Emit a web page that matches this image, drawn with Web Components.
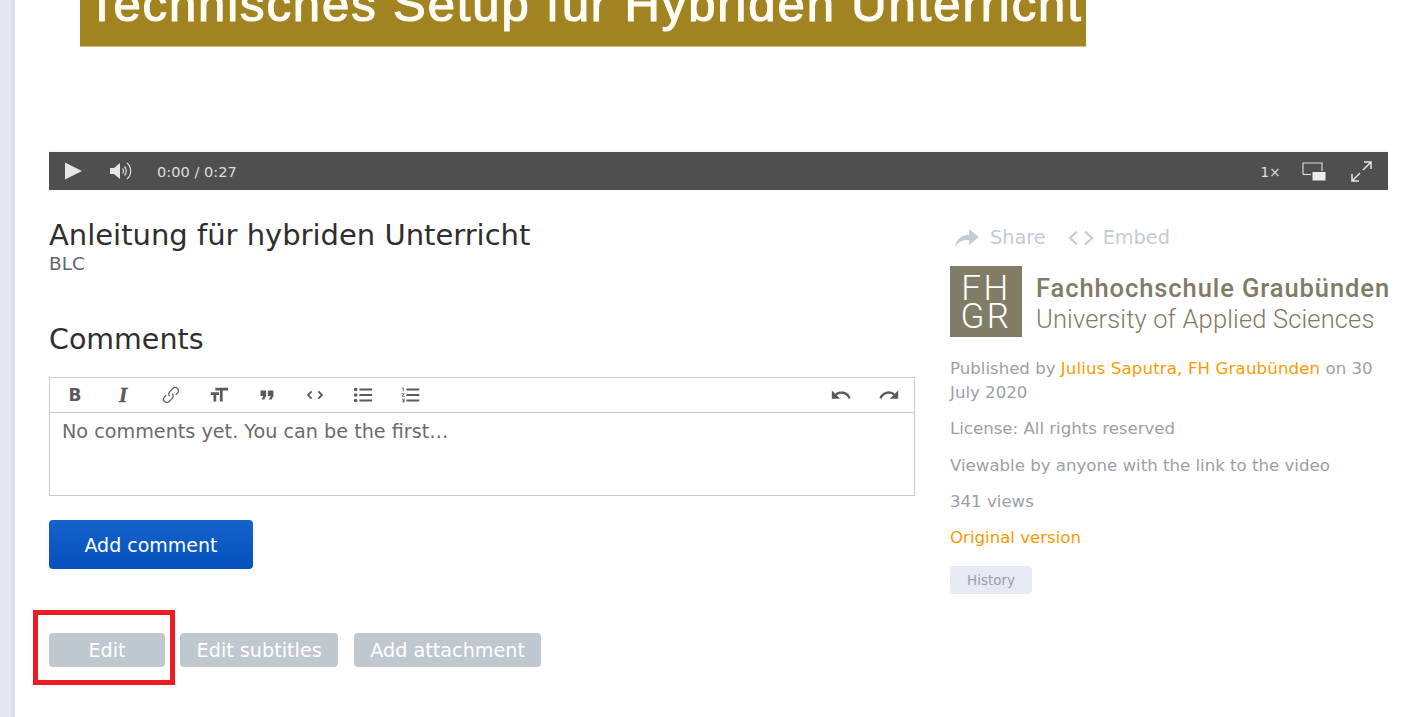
<!DOCTYPE html>
<html lang="en"><head><meta charset="utf-8"><title>Anleitung</title>
<style>
html,body{margin:0;padding:0;background:#fff;overflow:hidden}
body{font-family:"DejaVu Sans",Verdana,sans-serif;width:1414px;height:717px}
</style></head><body>
<app-shell>
  <video-player slot="video"></video-player>
  <div slot="main" style="display:contents">
    <video-title>Anleitung für hybriden Unterricht<span slot="sub">BLC</span></video-title>
    <comment-box></comment-box>
    <action-bar></action-bar>
  </div>
  <video-info slot="side"></video-info>
</app-shell>
<script>
function def(name, html){
  customElements.define(name, class extends HTMLElement{
    constructor(){super();this.attachShadow({mode:'open'}).innerHTML=html;}
  });
}
def('app-shell',`<style>
:host{display:flex;width:1414px;height:717px;position:relative;overflow:hidden;background:#fff}
.strip{width:15px;flex:none;background:linear-gradient(90deg,#e4e8f1 0,#e4e8f1 11px,#d5dae6 14px,#eceef4 15px);}
.page{flex:1;padding:0 26px 0 34px;display:flex;flex-direction:column;min-width:0}
.row{display:flex;gap:35px;margin-top:0}
.l{width:866px;flex:none}
.r{flex:1;min-width:0}
</style><div class="strip"></div><div class="page"><slot name="video"></slot><div class="row"><div class="l"><slot name="main"></slot></div><div class="r"><slot name="side"></slot></div></div></div>`);
def('video-player',`<style>
:host{display:flex;flex-direction:column;height:190px;width:1339px;font-family:"DejaVu Sans",sans-serif}
.pic{height:150px;background:#fff;padding-left:31px}
.banner{width:1006px;height:47px;background:#a28322;overflow:hidden;display:flex;align-items:flex-start;box-sizing:border-box;border-bottom:1px solid #d3c07f;padding-left:7px}
.banner span{font:400 49px/50px "Liberation Sans",sans-serif;color:#fffdf5;-webkit-text-stroke:1.200px #fffdf5;white-space:nowrap;letter-spacing:1.900px;margin-top:-21px;filter:blur(.5px)}
.sep{height:2px;background:#f6f6f6}
.bar{height:38px;background:#4f4f4f;display:flex;align-items:center;color:#dedede;font-size:14.6px;position:relative}
.bar svg{display:block;flex:none}
.t{margin-left:23px;margin-top:1px}
.sp{flex:1}
</style><div class="pic"><div class="banner"><span>Technisches Setup für Hybriden Unterricht</span></div></div><div class="sep"></div>
<div class="bar">
<svg style="margin-left:16px" width="17" height="18" viewBox="0 0 17 18"><path d="M0 0.5L17 9L0 17.5z" fill="#e6e6e6"/></svg>
<svg style="margin-left:28px" width="24" height="22" viewBox="0 0 24 22" fill="none"><path d="M0 8h4l6-5v16l-6-5H0z" fill="#e6e6e6"/><path d="M12.5 8.500a3.500 3.500 0 0 1 0 5M14.500 6.500a6.500 6.500 0 0 1 0 9M17 3a10.500 10.500 0 0 1 0 16" stroke="#e6e6e6" stroke-width="1.1"/></svg>
<span class="t">0:00 / 0:27</span><span class="sp"></span>
<span style="font-size:13.5px;letter-spacing:.3px;margin-right:21px;margin-top:2px">1×</span>
<svg style="margin-right:25px" width="24" height="19" viewBox="0 0 24 19" fill="none"><path d="M1 12.500V1h19v8" stroke="#e0e0e0" stroke-width="1.1"/><path d="M1 12.500h8" stroke="#e0e0e0" stroke-width="1.1"/><rect x="10.500" y="10" width="13" height="8.500" fill="#ececec"/></svg>
<svg style="margin-right:16px" width="21" height="21" viewBox="0 0 21 21" fill="none" stroke="#e6e6e6" stroke-width="1.5"><path d="M13 1h7v7M20 1l-8 8M1 13v7h7M1 20l8-8"/></svg>
</div>`);
def('video-title',`<style>
:host{display:block;padding-top:27px;color:#333}
.h{font:400 29px/36px "DejaVu Sans",sans-serif;color:#2e2e2e;height:36px}
.s{font:400 18.500px/22px "DejaVu Sans",sans-serif;color:#5e6670;}
</style><div class="h"><slot></slot></div><div class="s"><slot name="sub"></slot></div>`);
def('comment-box',`<style>
:host{display:block;margin-top:47px}
h2{font:400 28.500px/36px "DejaVu Sans",sans-serif;color:#2e2e2e;margin:0 0 19px;height:36px}
.box{border:1px solid #c6ccd0;height:119px;box-sizing:border-box}
.tb{height:34px;border-bottom:1px solid #c6ccd0;display:flex;align-items:center;padding:0 1px}
.b{width:48px;height:34px;display:flex;align-items:center;justify-content:center;flex:none;color:#555}
.b svg{width:22px;height:22px;fill:#5a5a5a;display:block}
.tx{font:700 17px/1 "DejaVu Sans",sans-serif;color:#5a5a5a}
.ix{font:italic 700 21px/1 "Liberation Serif",serif;color:#5a5a5a;-webkit-text-stroke:.5px #5a5a5a}
.sp{flex:1}
.ed{padding:7px 12px;font:400 19.200px/24px "DejaVu Sans",sans-serif;color:#6b6b6b}
button{margin-top:24px;display:block;width:204px;height:49px;border:0;border-radius:4px;background:linear-gradient(#1662ca,#0550bd);color:#fff;font:400 19px "DejaVu Sans",sans-serif;padding:0}
</style><h2>Comments</h2><div class="box"><div class="tb">
<span class="b"><span class="tx">B</span></span>
<span class="b"><span class="ix">I</span></span>
<span class="b"><svg viewBox="0 0 24 24"><path fill="none" stroke="#5a5a5a" stroke-width="1.3" d="M10.600 13.400a3.600 3.600 0 0 1 0-5.100l3.400-3.400a3.600 3.600 0 0 1 5.100 5.100l-2 1.800M13.400 10.600a3.600 3.600 0 0 1 0 5.100L10 19.100a3.600 3.600 0 0 1-5.100-5.100l2-1.800"/></svg></span>
<span class="b"><svg viewBox="0 0 24 24"><path d="M12 9v3H9v7H6v-7H3V9h9zM8 4h14v3h-6v12h-3V7H8V4z"/></svg></span>
<span class="b"><svg viewBox="0 0 24 24"><path d="M6 17h3l2-4V7H5v6h3zm8 0h3l2-4V7h-6v6h3z"/></svg></span>
<span class="b"><svg viewBox="0 0 24 24"><path d="M18.200 12L15 15.200l1.400 1.400L21 12l-4.600-4.600L15 8.800l3.200 3.200zM5.800 12L9 8.800 7.600 7.400 3 12l4.600 4.600L9 15.200 5.800 12z"/></svg></span>
<span class="b"><svg viewBox="0 0 24 24"><path d="M4 4a2 2 0 1 0 0 4 2 2 0 0 0 0-4zm0 6a2 2 0 1 0 0 4 2 2 0 0 0 0-4zm0 6a2 2 0 1 0 0 4 2 2 0 0 0 0-4zm4 3h14v-2H8v2zm0-6h14v-2H8v2zm0-8v2h14V5H8z"/></svg></span>
<span class="b"><svg viewBox="0 0 24 24"><path d="M2 17h2v.5H3v1h1v.5H2v1h3v-4H2v1zm1-9h1V4H2v1h1v3zm-1 3h1.800L2 13.100v.9h3v-1H3.200L5 10.900V10H2v1zm5-6v2h14V5H7zm0 14h14v-2H7v2zm0-6h14v-2H7v2z"/></svg></span>
<span class="sp"></span>
<span class="b"><svg viewBox="0 0 24 24"><path d="M12.500 8c-2.600 0-5 1-6.900 2.600L2 7v9h9l-3.600-3.600A8 8 0 0 1 20 16l2.400-.8a10.500 10.500 0 0 0-10-7.200z"/></svg></span>
<span class="b"><svg viewBox="0 0 24 24"><path d="M18.400 10.600a10.500 10.500 0 0 0-16.900 4.600L4 16a8 8 0 0 1 12.700-3.600L13 16h9V7l-3.600 3.600z"/></svg></span>
</div><div class="ed">No comments yet. You can be the first…</div></div><button>Add comment</button>`);
def('action-bar',`<style>
:host{display:flex;gap:16px;margin-top:64px;position:relative}
button{height:34px;border:0;border-radius:4px;background:#bfc8cf;color:#fff;font:400 19.200px "DejaVu Sans",sans-serif;padding:0 16px}
.edit{width:116px;margin-right:-1px}
.sub{padding:0 16.600px}
.ring{position:absolute;left:-16px;top:-23px;width:142px;height:75px;box-sizing:border-box;border:5px solid #ed1c24;pointer-events:none}
</style><button class="edit">Edit</button><button class="sub">Edit subtitles</button><button>Add attachment</button><div class="ring"></div>`);
def('video-info',`<style>
:host{display:block;color:#9aa0a8;font:400 16.600px/24px "DejaVu Sans",sans-serif;padding-top:36px}
a{color:#f90;text-decoration:none}
.who{letter-spacing:.14px}
.acts{display:flex;align-items:center;color:#c3ccd4;font-size:19.300px;line-height:24px;height:24px}
.acts svg{display:block;flex:none}
.logo{display:flex;margin-top:16px;height:71px;color:#7f7b65;white-space:nowrap}
.sq{width:72px;height:71px;background:#807c66;color:#fff;font:300 35px/28px Roboto,sans-serif;flex:none;text-align:center;padding-top:9px;box-sizing:border-box;letter-spacing:2.400px}
.lt{margin-left:14px;font-family:Roboto,sans-serif;font-size:25.500px;line-height:31px;padding-top:7px}
.lt b{font-weight:500;display:block;letter-spacing:.92px}.lt i{font-style:normal;font-weight:300;display:block;letter-spacing:.14px}
p{margin:0 0 12.300px}
.meta{margin-top:20px}
.hist{display:inline-block;background:#e6eaf2;border-radius:4px;font-size:13.500px;line-height:28px;height:28px;padding:0 17px;color:#9aa0a8;margin-top:4px}
</style><div class="acts">
<svg width="24" height="20" viewBox="0 0 24 20" style="margin-left:5px"><path d="M14 1l10 8-10 8v-5C8 12 3.500 13.500 0 19c1-7 6-12 14-12.500z" fill="#c3ccd4"/></svg>
<span style="margin-left:11px">Share</span>
<svg width="26" height="16" viewBox="0 0 26 16" fill="none" stroke="#c3ccd4" stroke-width="2.200" style="margin-left:22px"><path d="M9 1.500L2 8l7 6.500M17 1.500L24 8l-7 6.500"/></svg>
<span style="margin-left:9px">Embed</span></div>
<div class="logo"><div class="sq">FH<br>GR</div><div class="lt"><b>Fachhochschule Graubünden</b><i>University of Applied Sciences</i></div></div>
<div class="meta"><p>Published by <a class="who">Julius Saputra, FH Graubünden</a> on 30 July 2020</p><p>License: All rights reserved</p><p>Viewable by anyone with the link to the video</p><p>341 views</p><p><a>Original version</a></p><span class="hist">History</span></div>`);
</script>
</body></html>
